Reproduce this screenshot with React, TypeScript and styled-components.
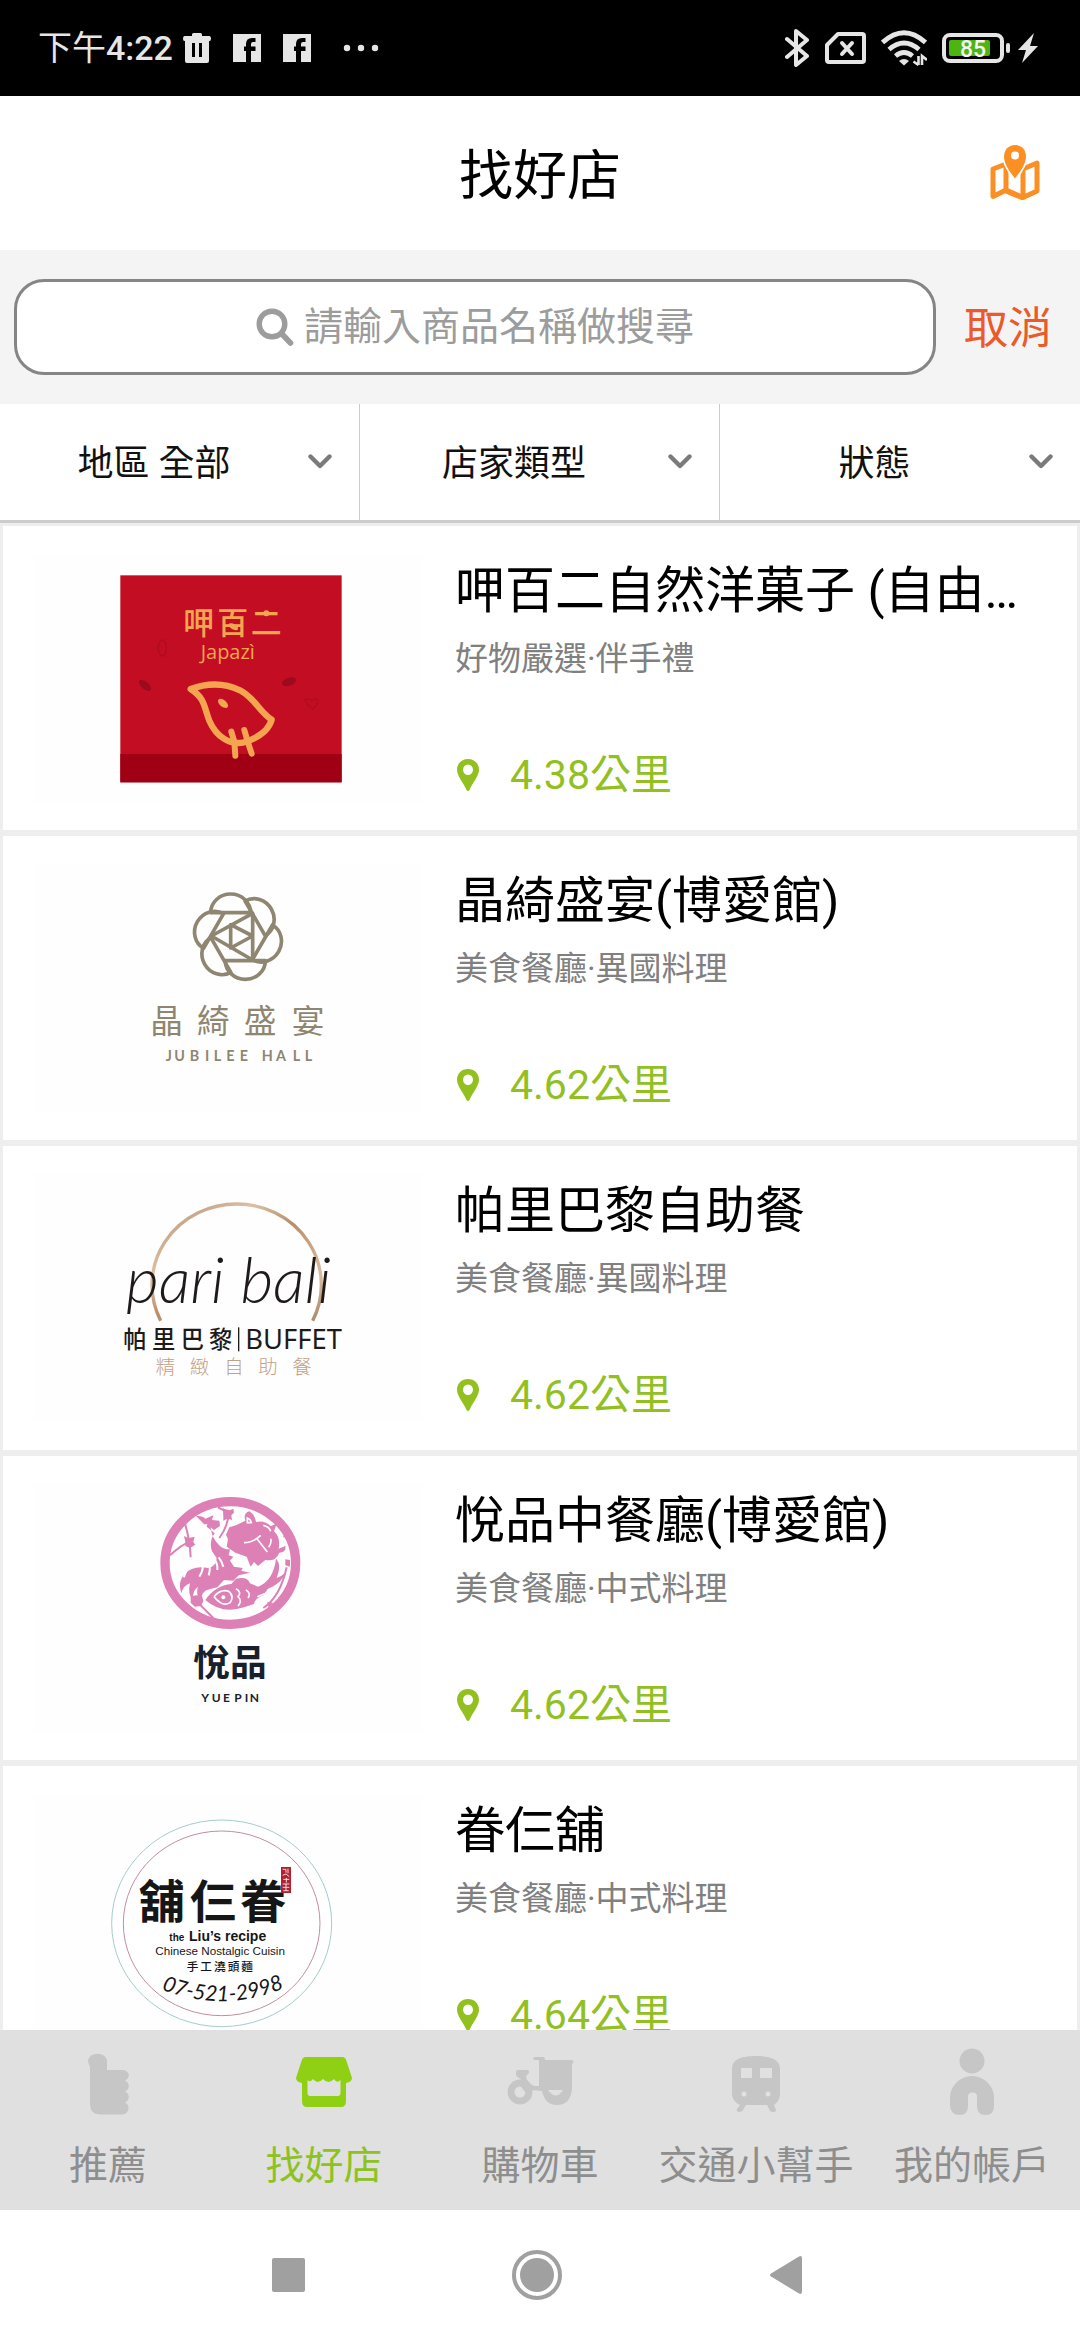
import React from "react";
import styled, { createGlobalStyle } from "styled-components";

const sans = `Roboto, "Noto Sans CJK TC", sans-serif`;
const cjk = `"Noto Sans CJK TC", sans-serif`;

const GlobalStyle = createGlobalStyle`
  *, *::before, *::after { box-sizing: border-box; }
  body { margin: 0; background: #fff; font-family: ${sans}; color: #000; }
  button, input, select { font: inherit; color: inherit; margin: 0; padding: 0; border: 0; background: none; }
  svg { display: block; flex: none; }
  h1, h2, p, ul { margin: 0; padding: 0; }
`;

const Screen = styled.div`
  display: flex;
  flex-direction: column;
  height: 100vh;
  overflow: hidden;
`;

/* ---------- status bar ---------- */

const StatusBar = styled.div`
  display: flex;
  align-items: center;
  justify-content: space-between;
  flex: none;
  height: 96px;
  padding: 0 42px 0 38px;
  background: #000;
  color: #e6e6e6;
`;

const StatusGroup = styled.div<{ $gap: number }>`
  display: flex;
  align-items: center;
  gap: ${(p) => p.$gap}px;
`;

const Clock = styled.time`
  margin-right: -12px;
  font-size: 34px;
  line-height: 48px;
  font-weight: 500;
`;

const ClockPeriod = styled.span`
  font-weight: 400;
`;

const Overflow = styled.span`
  padding-left: 10px;
`;

/* ---------- header ---------- */

const Header = styled.header`
  display: grid;
  grid-template-columns: 1fr auto 1fr;
  align-items: center;
  flex: none;
  height: 154px;
  padding: 0 40px;
  background: #fff;
`;

const PageTitle = styled.h1`
  grid-column: 2;
  padding-top: 8px;
  font-size: 54px;
  line-height: 80px;
  font-weight: 400;
`;

const MapButton = styled.button`
  justify-self: end;
  color: #fb8f23;
`;

/* ---------- search ---------- */

const SearchBar = styled.form`
  display: flex;
  align-items: center;
  flex: none;
  height: 154px;
  padding-left: 14px;
  background: #f4f4f4;
`;

const SearchBox = styled.label`
  display: flex;
  align-items: center;
  justify-content: center;
  gap: 10px;
  flex: 1;
  height: 96px;
  border: 3px solid #858585;
  border-radius: 30px;
  background: #fff;
  color: #9c9c9c;
`;

const SearchInput = styled.input`
  width: 390px;
  height: 60px;
  font-size: 39px;
  outline: 0;
  &::placeholder { color: #9c9c9c; opacity: 1; }
`;

const CancelButton = styled.button`
  width: 144px;
  padding-top: 3px;
  font-size: 44px;
  line-height: 64px;
  color: #ea5a2a;
`;

/* ---------- filters ---------- */

const Filters = styled.div`
  display: grid;
  grid-template-columns: repeat(3, 1fr);
  flex: none;
  height: 119px;
  border-bottom: 3px solid #ccc;
`;

const FilterCell = styled.div`
  display: flex;
  align-items: center;
  padding-right: 27px;
  border-right: 1px solid #ccc;
  &:last-child { border-right: 0; }
`;

const FilterSelect = styled.select`
  flex: 1;
  min-width: 0;
  height: 100%;
  padding-top: 3px;
  appearance: none;
  font-size: 36px;
  text-align: center;
  text-align-last: center;
  color: #111;
`;

/* ---------- shop list ---------- */

const ShopList = styled.ul`
  flex: 1;
  min-height: 0;
  overflow: hidden;
  list-style: none;
  background: #eee;
`;

const ShopCard = styled.li`
  display: flex;
  gap: 32px;
  height: 304px;
  margin: 3px 3px 6px;
  padding: 0 30px;
  background: #fff;
`;

const ShopInfo = styled.div`
  display: flex;
  flex-direction: column;
  flex: 1;
  min-width: 0;
  padding: 29px 0 25px;
`;

const ShopName = styled.h2`
  font-size: 50px;
  line-height: 72px;
  font-weight: 400;
  white-space: nowrap;
`;

const ShopCategory = styled.p`
  font-size: 33px;
  line-height: 64px;
  color: #808080;
`;

const Distance = styled.p`
  display: flex;
  align-items: center;
  gap: 31px;
  margin-top: auto;
  padding-left: 2px;
  font-size: 41px;
  line-height: 60px;
  color: #92c01f;
`;

/* ---------- bottom bars ---------- */

const TabBar = styled.nav`
  display: grid;
  grid-template-columns: repeat(5, 1fr);
  flex: none;
  height: 180px;
  background: #e0e0e0;
`;

const Tab = styled.a<{ $active?: boolean }>`
  display: flex;
  flex-direction: column;
  align-items: center;
  gap: 10px;
  padding-top: 16px;
  font-size: 39px;
  line-height: 60px;
  text-decoration: none;
  white-space: nowrap;
  color: ${(p) => (p.$active ? "#8dc21f" : "#8e8e8e")};
  svg { color: ${(p) => (p.$active ? "#8fd014" : "#c6c6c6")}; }
`;

const SystemBar = styled.div`
  display: flex;
  align-items: center;
  justify-content: center;
  gap: 196px;
  flex: none;
  height: 130px;
  padding-right: 6px;
  background: #fff;
`;

const SystemButton = styled.button`
  width: 53px;
  height: 53px;
  display: grid;
  place-items: center;
  color: #a0a0a0;
`;

/* ---------- status icons ---------- */

const TrashIcon = () => (
  <svg width="28" height="30" viewBox="0 0 28 30" fill="currentColor">
    <path fillRule="evenodd" d="M9 3V1.500Q9 0 10.500 0h7Q19 0 19 1.500V3h7.500Q28 3 28 5.500T26.500 8H26v20q0 2-2 2H4q-2 0-2-2V8h-.500Q0 8 0 5.500T1.500 3zM9 10v14h3V10zm7 0v14h3V10z" />
  </svg>
);

const FacebookIcon = () => (
  <svg width="28" height="28" viewBox="0 0 28 28" fill="currentColor">
    <path fillRule="evenodd" d="M0 0h28v28h-10V17h4.500V12.500H18V10q0-2 2-2h2.500V4H19q-6 0-6 6v2.500h-2V17h2v11H0z" />
  </svg>
);

const MoreIcon = () => (
  <svg width="36" height="8" viewBox="0 0 36 8" fill="currentColor">
    <circle cx="4" cy="4" r="3.200" /><circle cx="18" cy="4" r="3.200" /><circle cx="32" cy="4" r="3.200" />
  </svg>
);

const BluetoothIcon = () => (
  <svg width="25" height="40" viewBox="0 0 25 40" fill="none" stroke="currentColor" strokeWidth="4" strokeLinejoin="round" strokeLinecap="round">
    <path d="M2 11l20 17-11 9V3l11 9L2 29" />
  </svg>
);

const SimIcon = () => (
  <svg width="41" height="32" viewBox="0 0 41 32" fill="none" stroke="currentColor">
    <path d="M13 2h24q2 0 2 2v24q0 2-2 2H4q-2 0-2-2V13z" strokeWidth="4" strokeLinejoin="round" />
    <path d="M17 11l10 11M27 11L17 22" strokeWidth="4" strokeLinecap="round" />
  </svg>
);

const WifiIcon = () => (
  <svg width="46" height="36" viewBox="0 0 46 36" fill="none" stroke="currentColor" strokeWidth="4.800">
    <path d="M1.500 12.500Q23-7 44.500 12.500" />
    <path d="M8 19.500q15-13 30 0" />
    <path d="M14.500 26q8.500-7 17 0" />
    <path d="M18 31q5-4 10 0l-5 4.500z" fill="currentColor" stroke="none" />
    <path d="M37.500 26v9m-5-3.500l5 3.500M41 35v-9l5 4" strokeWidth="2.600" />
  </svg>
);

const BatteryIcon = () => (
  <svg width="69" height="30" viewBox="0 0 69 30">
    <rect x="2" y="2" width="58" height="26" rx="6" fill="none" stroke="currentColor" strokeWidth="4" />
    <rect x="64" y="10" width="4" height="10" rx="2" fill="currentColor" />
    <rect x="7" y="7" width="41" height="16" rx="2" fill="#4cb50f" />
    <text x="31" y="24" textAnchor="middle" fontFamily="Roboto, sans-serif" fontSize="23" fontWeight="500" fill="#f4f4f4">85</text>
  </svg>
);

const BoltIcon = () => (
  <svg width="20" height="30" viewBox="0 0 20 30" fill="currentColor">
    <path d="M16 0L0 17h8L4 30l16-17h-8z" />
  </svg>
);

/* ---------- page icons ---------- */

const MapPinIcon = () => (
  <svg width="50" height="56" viewBox="0 0 50 56" fill="currentColor">
    <path d="M3 24l13-5v26L3 51.500zM16 19v26l17 7.500V24L47 18v28l-14 6.500M16 46L33 53" fill="none" stroke="currentColor" strokeWidth="5" strokeLinejoin="round" />
    <path d="M25 0c6.500 0 11 5 11 11.500C36 19 30 27 25 33.500 20 27 14 19 14 11.500 14 5 18.500 0 25 0z" stroke="#fff" strokeWidth="4" paintOrder="stroke" />
    <circle cx="25" cy="10.500" r="4" fill="#fff" />
  </svg>
);

const SearchIcon = () => (
  <svg width="38" height="38" viewBox="0 0 38 38" fill="none" stroke="currentColor">
    <circle cx="16" cy="16" r="12.800" strokeWidth="5.400" />
    <path d="M26 26l8.500 9" strokeWidth="5.600" strokeLinecap="round" />
  </svg>
);

const ChevronIcon = () => (
  <svg width="24" height="16" viewBox="0 0 24 16" fill="none" stroke="#7a7a7a" strokeWidth="4.400" strokeLinecap="round" strokeLinejoin="round">
    <path d="M2.500 2.500L12 12l9.500-9.500" />
  </svg>
);

const PinIcon = () => (
  <svg width="22" height="32" viewBox="0 0 22 32" fill="currentColor">
    <path fillRule="evenodd" d="M11 0c6.500 0 11 4.800 11 10.500C22 17 16 23 12.500 31q-1.500 2-3 0C6 23 0 17 0 10.500 0 4.800 4.500 0 11 0zm0 5.500a5 5.200 0 1 0 0 10.400 5 5.200 0 0 0 0-10.400z" />
  </svg>
);

const ThumbIcon = () => (
  <svg width="41" height="80" viewBox="0 0 41 80" fill="currentColor">
    <path d="M2 21Q0 17 0 14a10 9 0 0 1 19 0v10h15c8 0 9 8 3 10.500 5 2 5 9 0 11 5 2 5 9 0 11 6 3 4 12-3 12H12Q2 68.500 2 58z" />
  </svg>
);

const StoreIcon = () => (
  <svg width="56" height="80" viewBox="0 0 56 80" fill="currentColor">
    <path fillRule="evenodd" d="M10 11h36q3.500 0 4.500 4L56 32q0 4-6 5v18q0 6-5 6H11q-5 0-5-6V37q-6-1-6-5l5.500-17Q6.500 11 10 11zm1.500 23v13q0 3 3 3h27q3 0 3-3V34q-3.500 4-6.500-1-5.500 6-11 0-5.500 6-10 0-3 4-5.500 1z" />
  </svg>
);

const MopedIcon = () => (
  <svg width="67" height="80" viewBox="0 0 67 80">
    <circle cx="13" cy="46" r="9" fill="none" stroke="currentColor" strokeWidth="7" />
    <path fill="currentColor" d="M9 26q0-2 2-2h9q3 0 2 3l-3 3q0 5 8 10h5V14h-5q-2-3 1-3h8q2 0 2 3h27q3 2 0 4v24q-1 17-15 17-12 0-15-14l-11-1-3 6-9-12 2-5q-5-2-5-5z" />
    <path d="M41 44h15q-7 11-15 0z" fill="#e0e0e0" />
  </svg>
);

const TrainIcon = () => (
  <svg width="48" height="80" viewBox="0 0 48 80" fill="currentColor">
    <path fillRule="evenodd" d="M24 10c14 0 24 3 24 13v25q0 7-6 11l2 5q0 2-3 2-3 0-4-3l-2-4H14l-3 5q-1 2-4 2t-2-3l3-4q-8-4-8-11V23c0-10 10-13 24-13zM9 22v10h11V22zm19 0v10h12V22zM12 45.500a2.500 2.500 0 1 0 0 5 2.500 2.500 0 0 0 0-5zm24 0a2.500 2.500 0 1 0 0 5 2.500 2.500 0 0 0 0-5z" />
  </svg>
);

const PersonIcon = () => (
  <svg width="44" height="80" viewBox="0 0 44 80" fill="currentColor">
    <circle cx="22" cy="15" r="12.500" />
    <path d="M0 52a22 22 0 0 1 44 0v8q0 9-8.500 9T27 60V50q0-3.500-4.500-3.500T18 50v10q0 9-8.500 9T0 60z" />
  </svg>
);

/* ---------- shop logos ---------- */

const Logo = ({ label, children }: { label: string; children: React.ReactNode }) => (
  <svg width="390" height="304" viewBox="33 0 390 304" role="img" aria-label={label}>
    <rect x="33" y="28" width="390" height="248" fill="#fefefe" />
    {children}
  </svg>
);

const JapaziLogo = () => (
  <Logo label="呷百二 Japazì">
    <g transform="translate(90 24) scale(.33333)">
      <rect x="91" y="76" width="664" height="621" fill="#c30d23" />
      <rect x="91" y="612" width="664" height="85" fill="#a00014" />
      <g fill="#f3a550" fontFamily={cjk}>
        <text x="280 382 482" y="252" fontSize="93" fontWeight="500">呷百二</text>
        <text x="332" y="327" fontSize="60" fontFamily='"Open Sans", "Noto Sans", sans-serif' fontWeight="500">Japazì</text>
      </g>
      <g fill="none" stroke="#f3a550" strokeLinecap="round" strokeLinejoin="round">
        <path d="M302 417C360 396 410 402 450 421 496 446 508 485 545 509 535 545 500 565 462 577 420 586 380 562 358 512 342 474 347 446 302 417z" strokeWidth="19" />
        <path d="M424 545l9 30 3 42M463 540l10 35 12 36" strokeWidth="18" />
      </g>
      <ellipse cx="399" cy="460" rx="18" ry="10" transform="rotate(40 399 460)" fill="#f3a550" />
      <ellipse cx="430" cy="230" rx="16" ry="8" transform="rotate(30 430 230)" fill="#f3a550" />
      <circle cx="529" cy="190" r="9" fill="#f3a550" />
      <g fill="#9e0a1d">
        <ellipse cx="165" cy="406" rx="22" ry="11" transform="rotate(40 165 406)" />
        <ellipse cx="597" cy="395" rx="22" ry="12" transform="rotate(-20 597 395)" />
      </g>
      <g fill="none" stroke="#b00c20" strokeWidth="4">
        <ellipse cx="217" cy="294" rx="12" ry="24" />
        <path d="M645 447q18-2 20 6 10-10 18-4 2 14-14 28-18-10-24-30z" />
      </g>
    </g>
  </Logo>
);

const JubileeLogo = () => (
  <Logo label="晶綺盛宴 Jubilee Hall">
    <g transform="translate(120 34) scale(.33333)" fill="#8f8671">
      <g transform="translate(354 200)" fill="none" stroke="#8f8671" strokeWidth="11" strokeLinejoin="round">
        {[0, 60, 120, 180, 240, 300].map((angle) => (
          <path key={angle} d="M-82-72A60 56 0 0 1 38-72Z" transform={`rotate(${angle})`} />
        ))}
        <path d="M44-70V70L-80-2zM-22-36V34L44-2z" />
      </g>
      <text x="91 231 371 515" y="489" fontSize="98" fontFamily={cjk} fontWeight="400">晶綺盛宴</text>
      <text x="137 163 209 255 281 319 359 400 425 468 518 554" y="572" fontSize="43" fontFamily="Lato, sans-serif" fontWeight="700">JUBILEE HALL</text>
    </g>
  </Logo>
);

const PariBaliLogo = () => (
  <Logo label="帕里巴黎 Buffet">
    <defs>
      <linearGradient id="pariRing" x1="0" y1="0" x2="1" y2="1">
        <stop offset="0" stopColor="#b08c6e" />
        <stop offset=".3" stopColor="#dcc0a4" />
        <stop offset=".5" stopColor="#b98d68" />
        <stop offset=".8" stopColor="#d9bda0" />
        <stop offset="1" stopColor="#a98263" />
      </linearGradient>
    </defs>
    <g transform="translate(100 34) scale(.33333)" fill="#1d1a19">
      <path d="M182 422A254 243 0 1 1 638 422" fill="none" stroke="url(#pariRing)" strokeWidth="10" />
      <text x="78" y="369" fontSize="190" fontFamily="Lato, sans-serif" fontStyle="italic" fontWeight="300">pari bali</text>
      <text x="70 156 242 327" y="503" fontSize="70" fontFamily={cjk} fontWeight="500">帕里巴黎</text>
      <path d="M414 442h4v72h-4z" />
      <text x="436" y="507" fontSize="82" fontFamily='"Noto Sans", sans-serif'>BUFFET</text>
      <text x="167 270 373 475 577" y="582" fontSize="58" fontFamily={cjk} fontWeight="300" fill="#c2a184">精緻自助餐</text>
    </g>
  </Logo>
);

const YuepinLogo = () => (
  <Logo label="悅品 Yuepin">
    <g transform="translate(140 24) scale(.33333)" fill="#dc80b6">
      <ellipse cx="271" cy="249" rx="196" ry="184" fill="none" stroke="#dc80b6" strokeWidth="28" />
      {/* rooster */}
      <path d="M168 108q20-2 28 8l24-10-4 14 22 2 2 16-18 12-10-8q2 30 24 52 12 14 34 14l-4 18 14 4-10 12 12 18 26 4-4 8 26 6-34 8-16 16-28-2-20 22-24 6q-24 4-26 36-16-20-8-44-18 12-14 42-18-18-10-52-20 6-26 30-12-34 10-58 24-26 70-18 24-4 26-30l-14-20q-10-30 8-54l-22-18z" />
      <path d="M178 148q8-16 24-16l-4 12 12 8-18 2z" fill="#fff" />
      <path d="M186 240q8 26-8 50M204 240q10 22 2 46M222 236q12 16 10 34M236 232q10 12 14 28M150 262q-14 10-18 30" fill="none" stroke="#fff" strokeWidth="6" />
      {/* pig */}
      <path d="M314 112q0-14 14-18 16 8 20 32 26-6 44 12l18-6-8 22q20 18 14 52l20-8q4 18-18 20-12 28-42 22l-22 18-12-12-10 14-12-30-34-12-26-18 4-22-6-14 10-22 20-6 28-14z" />
      <path d="M322 114q10 4 12 14h-12zM312 188q28 0 50-22M352 178l30 38M370 136q18 4 22 18M386 202q10-14 6-26" fill="none" stroke="#fff" strokeWidth="5" />
      {/* fish */}
      <path d="M196 360q30-44 78-48l14-16q34-8 42 14l24 10q46-18 54-84 18 18 2 58 16-6 28-18-12 34-54 50l-14 20q-26 10-28 26l-30 10q-66 22-116-22z" />
      <path d="M222 350q20-24 44-16 18 14 4 34-22 14-48-18M288 326q18 10 6 24 14 12 0 28M318 330q16 10 6 24M352 350q26-12 54-20" fill="none" stroke="#fff" strokeWidth="5" />
      <circle cx="250" cy="352" r="6" fill="#fff" />
      {/* branches and blossoms */}
      <path d="M134 128q16 50 18 104M264 90q6 40-26 84M90 226q32-30 64-44M170 364l50 50M234 82q20 12 34 10M430 170l24-8M440 262q-20 90-70 122" fill="none" stroke="#dc80b6" strokeWidth="6" />
      <path d="M248 84l16 8 16-6 2 12-8 8 2 14-14-4-12 6v-14zM132 168l14 6 18-4-4 16 6 8-16 10-14-6v-12zM152 350l16-4 18 2 4 14-6 16-20 2-12-12zM436 238l14 2v20l-14-4zM382 366l18 2-14 16z" />
      <g fill="#18212b">
        <text x="160" y="587" fontSize="110" fontFamily={cjk} fontWeight="700">悅品</text>
        <text x="184 215 249 283 314 329" y="667" fontSize="36" fontFamily="Lato, sans-serif" fontWeight="700">YUEPIN</text>
      </g>
    </g>
  </Logo>
);

const LiuLogo = () => (
  <Logo label="舖仨眷 the Liu's recipe">
    <g transform="translate(90 34) scale(.33333)" fill="#161616">
      <ellipse cx="395" cy="370" rx="330" ry="310" fill="#fff" stroke="#a5cbcb" strokeWidth="3" />
      <ellipse cx="395" cy="370" rx="295" ry="277" fill="none" stroke="#c08e9e" strokeWidth="3" />
      <text x="146 300 450" y="355" fontSize="138" fontFamily={cjk} fontWeight="700">舖仨眷</text>
      <rect x="573" y="201" width="30" height="78" fill="#b3202f" />
      <path d="M578 208h10v10M594 206v14M578 226l10-4 10 8M580 238h18M589 234v14M578 252h20M578 262h20M580 272h16M588 252v20" fill="none" stroke="#fff" strokeWidth="2.500" />
      <g fontFamily='"Liberation Sans", sans-serif'>
        <text x="238" y="422" fontSize="30" fontWeight="700">the</text>
        <text x="297" y="422" fontSize="42" fontWeight="700">Liu’s recipe</text>
        <text x="196" y="466" fontSize="35">Chinese Nostalgic Cuisin</text>
      </g>
      <text x="290 331 372 413 454" y="514" fontSize="35" fontFamily={cjk} fontWeight="500">手工澆頭麵</text>
      <path id="liuPhone" d="M214 568Q395 640 580 566" fill="none" />
      <text fontSize="64" fontFamily="Lato, sans-serif" fontStyle="italic">
        <textPath href="#liuPhone">07-521-2998</textPath>
      </text>
    </g>
  </Logo>
);

/* ---------- data ---------- */

const filters = [
  { name: "地區", value: "地區 全部" },
  { name: "店家類型", value: "店家類型" },
  { name: "狀態", value: "狀態" },
];

const shops = [
  { name: "呷百二自然洋菓子 (自由…", category: "好物嚴選·伴手禮", distance: "4.38公里", Picture: JapaziLogo },
  { name: "晶綺盛宴(博愛館)", category: "美食餐廳·異國料理", distance: "4.62公里", Picture: JubileeLogo },
  { name: "帕里巴黎自助餐", category: "美食餐廳·異國料理", distance: "4.62公里", Picture: PariBaliLogo },
  { name: "悅品中餐廳(博愛館)", category: "美食餐廳·中式料理", distance: "4.62公里", Picture: YuepinLogo },
  { name: "眷仨舖", category: "美食餐廳·中式料理", distance: "4.64公里", Picture: LiuLogo },
];

const tabs = [
  { label: "推薦", Icon: ThumbIcon },
  { label: "找好店", Icon: StoreIcon, active: true },
  { label: "購物車", Icon: MopedIcon },
  { label: "交通小幫手", Icon: TrainIcon },
  { label: "我的帳戶", Icon: PersonIcon },
];

export default function App() {
  return (
    <Screen lang="zh-TW">
      <GlobalStyle />
      <StatusBar>
        <StatusGroup $gap={22}>
          <Clock><ClockPeriod>下午</ClockPeriod>4:22</Clock>
          <TrashIcon />
          <FacebookIcon />
          <FacebookIcon />
          <Overflow><MoreIcon /></Overflow>
        </StatusGroup>
        <StatusGroup $gap={15}>
          <BluetoothIcon />
          <SimIcon />
          <WifiIcon />
          <StatusGroup $gap={7}>
            <BatteryIcon />
            <BoltIcon />
          </StatusGroup>
        </StatusGroup>
      </StatusBar>

      <Header>
        <PageTitle>找好店</PageTitle>
        <MapButton type="button" aria-label="地圖"><MapPinIcon /></MapButton>
      </Header>

      <SearchBar onSubmit={(e) => e.preventDefault()}>
        <SearchBox>
          <SearchIcon />
          <SearchInput type="text" aria-label="搜尋" placeholder="請輸入商品名稱做搜尋" />
        </SearchBox>
        <CancelButton type="button">取消</CancelButton>
      </SearchBar>

      <Filters>
        {filters.map((f) => (
          <FilterCell key={f.name}>
            <FilterSelect aria-label={f.name}>
              <option>{f.value}</option>
            </FilterSelect>
            <ChevronIcon />
          </FilterCell>
        ))}
      </Filters>

      <ShopList>
        {shops.map(({ name, category, distance, Picture }) => (
          <ShopCard key={name}>
            <Picture />
            <ShopInfo>
              <ShopName>{name}</ShopName>
              <ShopCategory>{category}</ShopCategory>
              <Distance><PinIcon />{distance}</Distance>
            </ShopInfo>
          </ShopCard>
        ))}
      </ShopList>

      <TabBar>
        {tabs.map(({ label, Icon, active }) => (
          <Tab key={label} href="#" $active={active}>
            <Icon />
            {label}
          </Tab>
        ))}
      </TabBar>

      <SystemBar>
        <SystemButton type="button" aria-label="最近">
          <svg width="33" height="34" viewBox="0 0 33 34"><rect width="33" height="34" rx="2" fill="currentColor" /></svg>
        </SystemButton>
        <SystemButton type="button" aria-label="主畫面">
          <svg width="50" height="50" viewBox="0 0 50 50">
            <circle cx="25" cy="25" r="23" fill="none" stroke="currentColor" strokeWidth="4" />
            <circle cx="25" cy="25" r="17" fill="currentColor" />
          </svg>
        </SystemButton>
        <SystemButton type="button" aria-label="返回">
          <svg width="32" height="38" viewBox="0 0 32 38"><path d="M1 17.500L29 .500q3-1.500 3 2v33q0 3.500-3 2L1 20.500q-2-1.500 0-3z" fill="currentColor" /></svg>
        </SystemButton>
      </SystemBar>
    </Screen>
  );
}
